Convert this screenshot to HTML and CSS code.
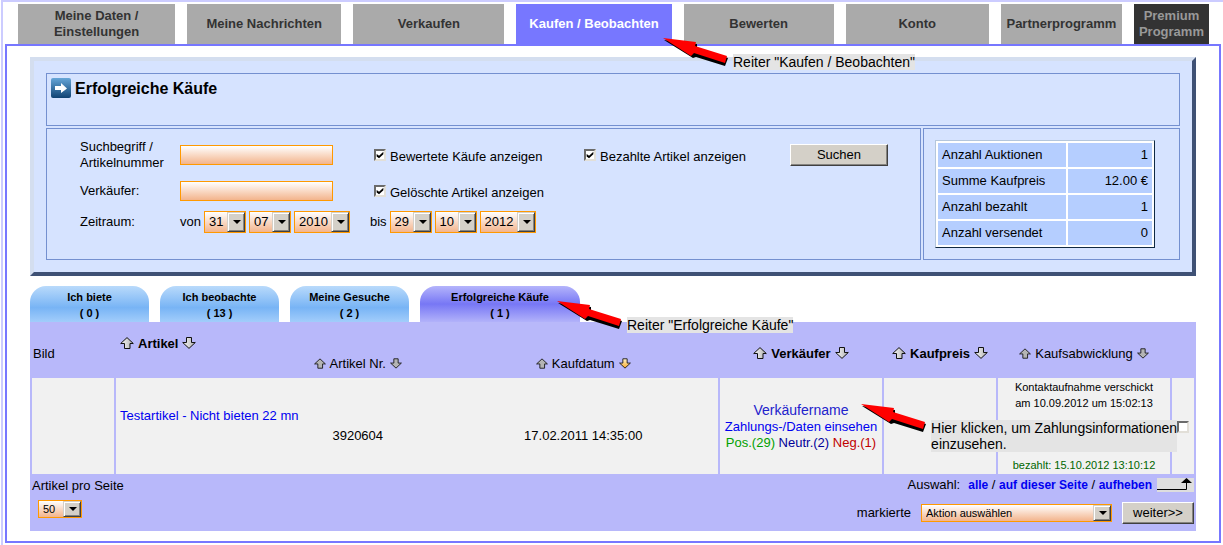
FILE: index.html
```
<!DOCTYPE html>
<html lang="de">
<head>
<meta charset="utf-8">
<title>Erfolgreiche Käufe</title>
<link rel="stylesheet" href="styles.css">
</head>
<body>
<svg class="defs" aria-hidden="true">
  <defs>
    <linearGradient id="g-grey" x1="0" y1="0" x2="1" y2="0">
      <stop offset="0" stop-color="#f4f4f4"/><stop offset="0.5" stop-color="#d6d6d6"/><stop offset="1" stop-color="#a8a8a8"/>
    </linearGradient>
    <linearGradient id="g-gold" x1="0" y1="0" x2="0" y2="1">
      <stop offset="0" stop-color="#fff3c8"/><stop offset="1" stop-color="#f7a92c"/>
    </linearGradient>
    <linearGradient id="g-blue" x1="0" y1="0" x2="0" y2="1">
      <stop offset="0" stop-color="#66a6d8"/><stop offset="1" stop-color="#0f4273"/>
    </linearGradient>
    <symbol id="up" viewBox="0 0 14 12">
      <path d="M7 .6 13.3 6.5H10V11.5H4.5V6.5H.7Z" stroke="#111" stroke-width="1" stroke-linejoin="round"/>
    </symbol>
    <symbol id="down" viewBox="0 0 14 12">
      <path d="M7 11.4 13.3 5.5H9.5V.5H4.5V5.5H.7Z" stroke="#111" stroke-width="1" stroke-linejoin="round"/>
    </symbol>
    <symbol id="pointer" viewBox="0 0 66 28">
      <path d="M1 2 34 6 34 10 65 20 62 28 33 19 30 20Z" fill="#000"/>
      <path d="M0 0 33 4 32 8 64 18 62 25 31 15 28 18Z" fill="#f00"/>
    </symbol>
  </defs>
</svg>

<div class="page">
  <nav class="nav">
    <a class="w157" href="#">Meine Daten /<br>Einstellungen</a>
    <a class="w154" href="#">Meine Nachrichten</a>
    <a class="w151" href="#">Verkaufen</a>
    <a class="w155 current" href="#">Kaufen / Beobachten</a>
    <a class="w150" href="#">Bewerten</a>
    <a class="w143" href="#">Konto</a>
    <a class="w121" href="#">Partnerprogramm</a>
    <a class="w75 premium" href="#">Premium<br>Programm</a>
  </nav>

  <main class="frame">
    <section class="panel">
      <div class="box title">
        <svg width="20" height="20" viewBox="0 0 20 20" aria-hidden="true">
          <rect width="20" height="20" rx="2" fill="url(#g-blue)"/>
          <path d="M4 8H10V5L16 10.5 10 15V12H4Z" fill="#fff"/>
        </svg>
        <h1>Erfolgreiche Käufe</h1>
      </div>
      <div class="columns">
        <form class="box search">
          <label for="term">Suchbegriff /<br>Artikelnummer</label>
          <input class="text" id="term" type="text">
          <label class="check"><input type="checkbox" checked>Bewertete Käufe anzeigen</label>
          <label class="check"><input type="checkbox" checked>Bezahlte Artikel anzeigen</label>
          <button class="btn" type="button">Suchen</button>

          <label class="row2" for="seller">Verkäufer:</label>
          <input class="text" id="seller" type="text">
          <label class="check"><input type="checkbox" checked>Gelöschte Artikel anzeigen</label>

          <span class="row3">Zeitraum:</span>
          <div class="period">
            <div class="date">von
              <span class="pick day"><select aria-label="von Tag"><option>31</option></select></span>
              <span class="pick day"><select aria-label="von Monat"><option>07</option></select></span>
              <span class="pick year"><select aria-label="von Jahr"><option>2010</option></select></span>
            </div>
            <div class="date">bis
              <span class="pick day"><select aria-label="bis Tag"><option>29</option></select></span>
              <span class="pick day"><select aria-label="bis Monat"><option>10</option></select></span>
              <span class="pick year"><select aria-label="bis Jahr"><option>2012</option></select></span>
            </div>
          </div>
        </form>
        <div class="box summary">
          <table class="stats">
            <tr><th scope="row">Anzahl Auktionen</th><td>1</td></tr>
            <tr><th scope="row">Summe Kaufpreis</th><td>12.00 €</td></tr>
            <tr><th scope="row">Anzahl bezahlt</th><td>1</td></tr>
            <tr><th scope="row">Anzahl versendet</th><td>0</td></tr>
          </table>
        </div>
      </div>
      <div class="note note-top">
        <svg class="pointer" aria-hidden="true"><use href="#pointer"/></svg>
        <span>Reiter "Kaufen / Beobachten"</span>
      </div>
    </section>

    <div class="subtabs">
      <a href="#">Ich biete<br>( 0 )</a>
      <a href="#">Ich beobachte<br>( 13 )</a>
      <a href="#">Meine Gesuche<br>( 2 )</a>
      <a class="active" href="#">Erfolgreiche Käufe<br>( 1 )</a>
      <div class="note note-tab">
        <svg class="pointer" aria-hidden="true"><use href="#pointer"/></svg>
        <span>Reiter "Erfolgreiche Käufe"</span>
      </div>
    </div>

    <section class="list">
      <table class="items">
        <colgroup>
          <col class="c-pic"><col><col class="c-seller"><col class="c-price"><col class="c-state"><col class="c-pick">
        </colgroup>
        <thead>
          <tr>
            <th class="light left">Bild</th>
            <th class="article">
              <div class="first"><svg class="big"><use href="#up"/></svg>Artikel<svg class="big"><use href="#down"/></svg></div>
              <div class="details light">
                <span><svg class="small"><use href="#up"/></svg>Artikel Nr.<svg class="small"><use href="#down"/></svg></span>
                <span><svg class="small"><use href="#up"/></svg>Kaufdatum<svg class="small gold"><use href="#down"/></svg></span>
              </div>
            </th>
            <th><svg class="big"><use href="#up"/></svg>Verkäufer<svg class="big"><use href="#down"/></svg></th>
            <th><svg class="big"><use href="#up"/></svg>Kaufpreis<svg class="big"><use href="#down"/></svg></th>
            <th class="light"><svg class="small"><use href="#up"/></svg>Kaufsabwicklung<svg class="small"><use href="#down"/></svg></th>
            <th></th>
          </tr>
        </thead>
        <tbody>
          <tr>
            <td></td>
            <td class="article">
              <div class="first"><a href="#">Testartikel - Nicht bieten 22 mn</a></div>
              <div class="details"><span>3920604</span><span>17.02.2011 14:35:00</span></div>
            </td>
            <td class="seller">
              <a class="name" href="#">Verkäufername</a>
              <a href="#">Zahlungs-/Daten einsehen</a>
              <div><span class="pos">Pos.(29)</span> <span class="neu">Neutr.(2)</span> <span class="neg">Neg.(1)</span></div>
            </td>
            <td></td>
            <td class="state">
              <div>Kontaktaufnahme verschickt<br>am 10.09.2012 um 15:02:13</div>
              <div class="paid">bezahlt: 15.10.2012 13:10:12</div>
              <div class="note note-row">
                <svg class="pointer" aria-hidden="true"><use href="#pointer"/></svg>
                <span>Hier klicken, um Zahlungsinformationen<br>einzusehen.</span>
              </div>
            </td>
            <td class="mark"><input type="checkbox" aria-label="Artikel markieren"></td>
          </tr>
        </tbody>
      </table>
      <footer class="foot">
        <div class="perpage">
          <label for="count">Artikel pro Seite</label>
          <span class="pick short count"><select id="count"><option>50</option></select></span>
        </div>
        <div class="actions">
          <div class="selection">
            <span class="caption">Auswahl:</span>
            <span><a href="#">alle</a> / <a href="#">auf dieser Seite</a> / <a href="#">aufheben</a></span>
            <svg class="turn" width="37" height="14" viewBox="0 0 37 14" aria-hidden="true">
              <rect width="37" height="14" fill="#dedede"/>
              <path d="M0 11.5H29.5V3" fill="none" stroke="#000"/>
              <path d="M24 5 29.5 0 35 5Z"/>
            </svg>
          </div>
          <div class="apply">
            <label for="action">markierte</label>
            <span class="pick short wide"><select id="action"><option>Aktion auswählen</option></select></span>
            <button class="btn go" type="button">weiter&gt;&gt;</button>
          </div>
        </div>
      </footer>
    </section>
  </main>
</div>
</body>
</html>
```

FILE: styles.css
```
* { box-sizing: border-box; }

body {
  margin: 0;
  background: #fff;
  color: #000;
  font: 13px/16px "Liberation Sans", Arial, sans-serif;
}

a { color: #0000f0; text-decoration: none; }
.defs { position: absolute; width: 0; height: 0; }

.page {
  min-height: 100vh;
  margin-left: 1px;
  padding: 2px;
  border: solid #ccccff;
  border-width: 2px 0 0 2px;
}

/* main navigation */
.nav { display: flex; gap: 12px; padding: 0 12px 0 13px; }
.nav a {
  display: flex;
  flex-basis: 0;
  min-width: 0;
  height: 40px;
  align-items: center;
  justify-content: center;
  background: #aaa;
  color: #333;
  font-weight: bold;
  text-align: center;
  white-space: nowrap;
}
.nav .w157 { flex-grow: 157; }
.nav .w154 { flex-grow: 154; }
.nav .w151 { flex-grow: 151; }
.nav .w155 { flex-grow: 155; }
.nav .w150 { flex-grow: 150; }
.nav .w143 { flex-grow: 143; }
.nav .w121 { flex-grow: 121; }
.nav .w75 { flex-grow: 75; }
.nav .current { background: #7777ff; color: #fff; }
.nav .premium { background: #333; color: #999; }

.frame { padding: 11px 23px 10px; border: 2px solid #7777ff; }

/* search panel */
.panel {
  position: relative;
  padding: 12px;
  border: 4px solid;
  border-color: #d4deef #3f5175 #3f5175 #d4deef;
  background: #d6e3ff;
}
.box { border: 1px solid #7490d0; }
.title { display: flex; gap: 4px; height: 53px; padding: 4px; }
h1 { margin: 0; font-size: 16px; line-height: 22px; }
.columns { display: flex; gap: 2px; margin-top: 2px; }
.search {
  display: grid;
  flex: 1;
  grid-template-columns: 100px 194px 210px 206px 98px;
  grid-template-rows: 32px 24px 22px;
  gap: 8px 0;
  align-items: center;
  align-content: start;
  padding: 10px 20px 10px 33px;
}
.row2, .row3 { grid-column: 1; }
.text {
  width: 153px;
  height: 20px;
  padding: 0 3px;
  border: 1px solid #ff9900;
  background: linear-gradient(#fff, #f3b48c);
}
.check { display: flex; gap: 4px; height: 20px; align-items: flex-end; }
.check input { align-self: center; }

input[type="checkbox"] {
  width: 12px;
  height: 12px;
  margin: 0;
  appearance: none;
  border: 2px solid;
  border-color: #6b6b6b #e2dfd8 #e2dfd8 #6b6b6b;
  background: #fff;
}
input[type="checkbox"]:checked::before {
  display: block;
  width: 8px;
  height: 8px;
  background: #000;
  clip-path: polygon(8% 36%, 38% 60%, 92% 8%, 92% 40%, 38% 92%, 8% 68%);
  content: "";
}

.btn {
  height: 22px;
  padding: 0;
  border: 1px solid;
  border-color: #fff #404040 #404040 #fff;
  background: #d4d0c8;
  box-shadow: inset -1px -1px #868480;
  color: #000;
  font: inherit;
}

.period { display: flex; grid-column: 2 / -1; gap: 20px; }
.date { display: flex; gap: 3px; align-items: center; }

/* drop-down with a raised arrow button */
.pick { position: relative; display: block; height: 22px; }
.pick select {
  width: 100%;
  height: 100%;
  padding: 0 17px 0 4px;
  appearance: none;
  border: 1px solid #ff9900;
  border-radius: 0;
  background: linear-gradient(#fff, #f3b48c);
  color: #000;
  font: inherit;
}
.pick::before {
  position: absolute;
  top: 1px;
  right: 1px;
  bottom: 1px;
  width: 16px;
  border: 1px solid;
  border-color: #d4d0c8 #404040 #404040 #d4d0c8;
  background: #d4d0c8;
  box-shadow: inset 1px 1px #fff, inset -1px -1px #868480;
  content: "";
  pointer-events: none;
}
.pick::after {
  position: absolute;
  top: calc(50% - 2px);
  right: 5px;
  border: solid transparent;
  border-width: 4px 4px 0;
  border-top-color: #000;
  content: "";
  pointer-events: none;
}
.day { width: 42px; }
.year { width: 56px; }
.short { height: 18px; font-size: 11px; }
.count { width: 44px; margin: 6px; }
.wide { width: 191px; }

/* totals */
.summary { flex: none; width: 257px; padding: 11px 24px 11px 11px; }
.stats {
  width: 100%;
  border: 1px solid;
  border-color: #b4c6dc #102a44 #102a44 #b4c6dc;
  border-spacing: 2px;
  background: #fff;
}
.stats th, .stats td { height: 24px; padding: 0 4px; background: #b5ceff; }
.stats th { width: 128px; font-weight: normal; text-align: left; }
.stats td { text-align: right; }

/* list tabs */
.subtabs { position: relative; display: flex; gap: 11px; margin-top: 10px; }
.subtabs a {
  width: 119px;
  height: 36px;
  padding-top: 3px;
  border-radius: 16px 16px 0 0;
  background: linear-gradient(#b9dafb, #78b4f5 60%, #a2cdfb);
  color: #000;
  font-size: 11px;
  font-weight: bold;
  text-align: center;
}
.subtabs .active { width: 160px; background: linear-gradient(#b4b4fb, #7777f5 50%, #b2b2fa); }

/* item table */
.list { background: #b8b8fa; }
.items { width: 100%; table-layout: fixed; border-spacing: 2px; }
.c-pic { width: 82px; }
.c-seller { width: 162px; }
.c-price { width: 112px; }
.c-state { width: 172px; }
.c-pick { width: 22px; }
.items th { height: 52px; padding: 8px 0 0; white-space: nowrap; }
.items td { height: 96px; padding: 0; background: #f1f1f1; }
.items .light { font-weight: normal; }
.items .left { padding-left: 1px; text-align: left; }
.items svg { vertical-align: -1px; }
.big { width: 14px; height: 12px; margin: 0 4px; fill: url(#g-grey); }
.small { width: 12px; height: 11px; margin: 0 4px; fill: #b4b4b4; }
.gold { fill: url(#g-gold); }
.first { padding-left: 4px; line-height: 20px; text-align: left; }
th .first { padding-left: 0; }
.details {
  display: grid;
  grid-template-columns: 1fr 1fr;
  padding: 0 22px 0 129px;
  line-height: 20px;
  text-align: center;
}
.seller { text-align: center; }
.seller a { display: block; }
.seller .name { color: #2222cc; font-size: 14px; line-height: 18px; }
.pos { color: #00a000; }
.neu { color: #000099; }
.neg { color: #c00000; }
.state { position: relative; font-size: 11px; text-align: center; }
.paid { margin-top: 46px; color: #006600; }
.mark { text-align: center; }
.mark input { vertical-align: middle; }

/* list footer */
.foot { display: flex; justify-content: space-between; padding: 2px 2px 7px; }
.actions { display: flex; flex-direction: column; gap: 10px; align-items: flex-end; }
.selection, .apply { display: flex; align-items: center; }
.selection { height: 14px; }
.caption { margin-right: 8px; }
.selection a { font-size: 12px; font-weight: bold; }
.turn { margin-left: 5px; }
.apply { gap: 10px; }
.go { width: 72px; }

/* callouts */
.note { position: absolute; z-index: 1; font-size: 14px; text-align: left; white-space: nowrap; }
.note span { display: block; background: #e4e4e4; }
.note .pointer { position: absolute; top: -16px; right: 100%; width: 66px; height: 28px; margin-right: 4px; }
.note-top { top: -7px; left: 699px; }
.note-tab { top: 31px; left: 597px; }
.note-row { top: 42px; right: -7px; }
```
